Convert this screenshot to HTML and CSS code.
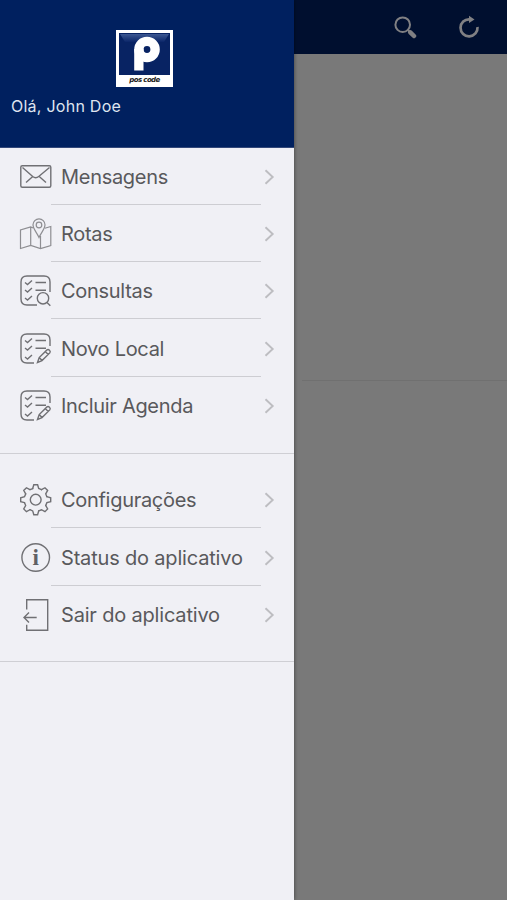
FILE: index.html
```html
<!DOCTYPE html>
<html lang="pt-BR">
<head>
<meta charset="utf-8">
<title>Menu</title>
<link rel="stylesheet" href="styles.css">
</head>
<body>
<svg width="0" height="0" class="defs">
  <symbol id="chev" viewBox="0 0 11 16"><path d="M1.5 1.2 8.7 8l-7.2 6.8" fill="none" stroke="#bdbdc1" stroke-width="1.9"/></symbol>
  <symbol id="edit" viewBox="0 0 34 34">
    <path d="M31 14V8q0-6-6-6H8Q2 2 2 8v17q0 6 6 6h7"/>
    <path d="m6 8.500 2.500 2 4.500-4M6 16l2.500 2 4.500-4M6 25l2.500 2 4.500-4M16.500 8.500H27M16.500 16.200H27"/>
    <path d="m18.500 30.500 1.700-4.900L28 17.900q1.200-.8 2.500.4t.3 2.600L23 28.600ZM26.300 19.600l2.900 2.900M20.200 25.600l2.800 3"/>
  </symbol>
</svg>
<div class="app">
  <aside class="drawer">
    <header class="profile">
      <div class="logo">
        <svg class="mark" width="51" height="42" viewBox="0 0 51 42">
          <defs><linearGradient id="shine" x2="0" y2="1"><stop offset="0" stop-color="#3d5892"/><stop offset="1" stop-color="#0b2669"/></linearGradient></defs>
          <rect width="51" height="42" fill="#082363"/>
          <path d="M1 1h49l-5 8H6Z" fill="url(#shine)"/>
          <circle cx="28" cy="16.500" r="8.100" fill="none" stroke="#fff" stroke-width="9.400"/>
          <rect x="15.200" y="16" width="9.300" height="21.500" fill="#fff"/>
        </svg>
        <span class="brand">pos code</span>
      </div>
      <p class="hello">Olá, John Doe</p>
    </header>
    <nav>
      <ul class="menu first">
        <li><svg class="icon" viewBox="0 0 34 34"><rect x="1.800" y="5.700" width="30" height="21.500" rx="1.500"/><path d="m3.500 7.500 10.200 9q3 2.400 6 0l10.800-9M7 22.500l6.500-5.800M27 22.500l-6.500-5.800"/></svg><span>Mensagens</span><svg class="chev"><use href="#chev"/></svg></li>
        <li><svg class="icon thin" viewBox="0 0 34 34"><path d="m14.300 11-2.600-1L1.500 13v18.500l10.200-3 9.800 3 10.300-3V9.500l-6 1.800M11.700 10v18.500M21.500 19v12.500"/><path d="M20 20.500C17.500 15 14 12 14 7.800a6 6 0 0 1 12 0C26 12 22.500 15 20 20.500Z"/><circle cx="20" cy="8" r="2.800"/></svg><span>Rotas</span><svg class="chev"><use href="#chev"/></svg></li>
        <li><svg class="icon" viewBox="0 0 34 34"><path d="M31 18V8q0-6-6-6H8Q2 2 2 8v17q0 6 6 6h10"/><path d="m6 8.500 2.500 2 4.500-4M6 16l2.500 2 4.500-4M6 24l2.500 2 4.500-4M16.500 8.500H27M16.500 16.200H27"/><circle cx="24" cy="24.300" r="5.700"/><path d="m28 28.500 3.300 3.300"/></svg><span>Consultas</span><svg class="chev"><use href="#chev"/></svg></li>
        <li><svg class="icon"><use href="#edit"/></svg><span>Novo Local</span><svg class="chev"><use href="#chev"/></svg></li>
        <li><svg class="icon"><use href="#edit"/></svg><span>Incluir Agenda</span><svg class="chev"><use href="#chev"/></svg></li>
      </ul>
      <ul class="menu second">
        <li><svg class="icon" viewBox="0 0 34 34"><g transform="translate(16.700 16.700)"><circle r="5.400"/><g stroke-linecap="round"><path id="tooth" d="M-3-11.200-1.900-15H1.900L3-11.200 5.800-10"/><use href="#tooth" transform="rotate(45)"/><use href="#tooth" transform="rotate(90)"/><use href="#tooth" transform="rotate(135)"/><use href="#tooth" transform="rotate(180)"/><use href="#tooth" transform="rotate(225)"/><use href="#tooth" transform="rotate(270)"/><use href="#tooth" transform="rotate(315)"/></g></g></svg><span>Configurações</span><svg class="chev"><use href="#chev"/></svg></li>
        <li><svg class="icon" viewBox="0 0 34 34"><circle cx="16.700" cy="16.500" r="13.800"/><text class="info" x="16.700" y="24" text-anchor="middle">i</text></svg><span class="wide">Status do aplicativo</span><svg class="chev"><use href="#chev"/></svg></li>
        <li><svg class="icon" viewBox="0 0 34 34"><path d="M7.700 11.500V1.700h21v30.600h-21v-5.600M5 19.500h12.700M10 14.500l-5 5 5 5"/></svg><span class="wide">Sair do aplicativo</span><svg class="chev"><use href="#chev"/></svg></li>
      </ul>
    </nav>
  </aside>
  <main class="page">
    <div class="bar">
      <svg width="24" height="24" viewBox="0 0 24 24" fill="none" stroke="#808083"><circle cx="9.700" cy="9.700" r="7.300" stroke-width="2"/><path d="m14.500 14.500 2.500 2.500" stroke-width="2"/><path d="m17.300 17.300 3.700 3.700" stroke-width="4.500" stroke-linecap="round"/></svg>
      <svg width="24" height="24" viewBox="0 0 24 24"><path d="M12.500 4.300A8.500 8.500 0 1 0 20.500 12" fill="none" stroke="#808083" stroke-width="2.700"/><path d="M12 .8 17.500 4.500 12 8Z" fill="#808083"/></svg>
    </div>
    <div class="pane"></div>
  </main>
</div>
</body>
</html>
```
FILE: styles.css
```css
body { margin: 0; font-family: Inter, "Liberation Sans", sans-serif; }
.defs { display: block; }
.app { display: flex; height: 900px; overflow: hidden; background: #797979; }
.drawer { width: 294px; background: #f0f0f5; flex: none; box-shadow: 0 0 4px rgba(0,0,0,.5); z-index: 1; }
.profile { height: 148px; box-sizing: border-box; padding-top: 30px; background: #00205f; border-bottom: 1px solid #33487a; }
.logo { width: 57px; height: 57px; margin-left: 116px; background: #fff; display: flex; flex-direction: column; align-items: center; box-sizing: border-box; padding-top: 3px; }
.mark { flex: none; }
.brand { font: italic 900 7px/10px "DejaVu Sans", sans-serif; letter-spacing: -.6px; color: #222; white-space: nowrap; }
.hello { margin: 9px 0 0 11px; font-size: 16px; line-height: 20px; letter-spacing: .25px; color: #dfe4ef; }
.menu { list-style: none; margin: 0; padding: 0; box-sizing: border-box; border-bottom: 1px solid #cfcfd4; }
.first { height: 306px; }
.second { height: 208px; padding-top: 17px; }
.menu li { height: 57.4px; box-sizing: border-box; display: flex; align-items: center; padding: 1px 19px 0 19px; font-size: 20px; color: #59595c;
  background: linear-gradient(#cdcdd2, #cdcdd2) 51px 100% / 210px 1px no-repeat; }
.first li:first-child { height: 56.6px; padding-top: 2px; }
.menu li:last-child { background: none; }
.menu span { flex: 1; margin-left: 8px; white-space: nowrap; letter-spacing: -.3px; }
.menu .wide { letter-spacing: -.18px; }
.icon { width: 34px; height: 34px; flex: none; fill: none; stroke: #707074; stroke-width: 1.4; }
.thin { stroke: #8e8e92; stroke-width: 1.2; }
.info { font: bold 23px "Liberation Serif", serif; fill: #606064; stroke: none; }
.chev { width: 11px; height: 16px; flex: none; }
.page { flex: 1; display: flex; flex-direction: column; }
.bar { height: 54px; background: #000f2f; display: flex; align-items: center; justify-content: flex-end; gap: 40px; padding-right: 26px; flex: none; }
.pane { height: 326px; border-bottom: 1px solid #707070; margin-left: 8px; }
```
